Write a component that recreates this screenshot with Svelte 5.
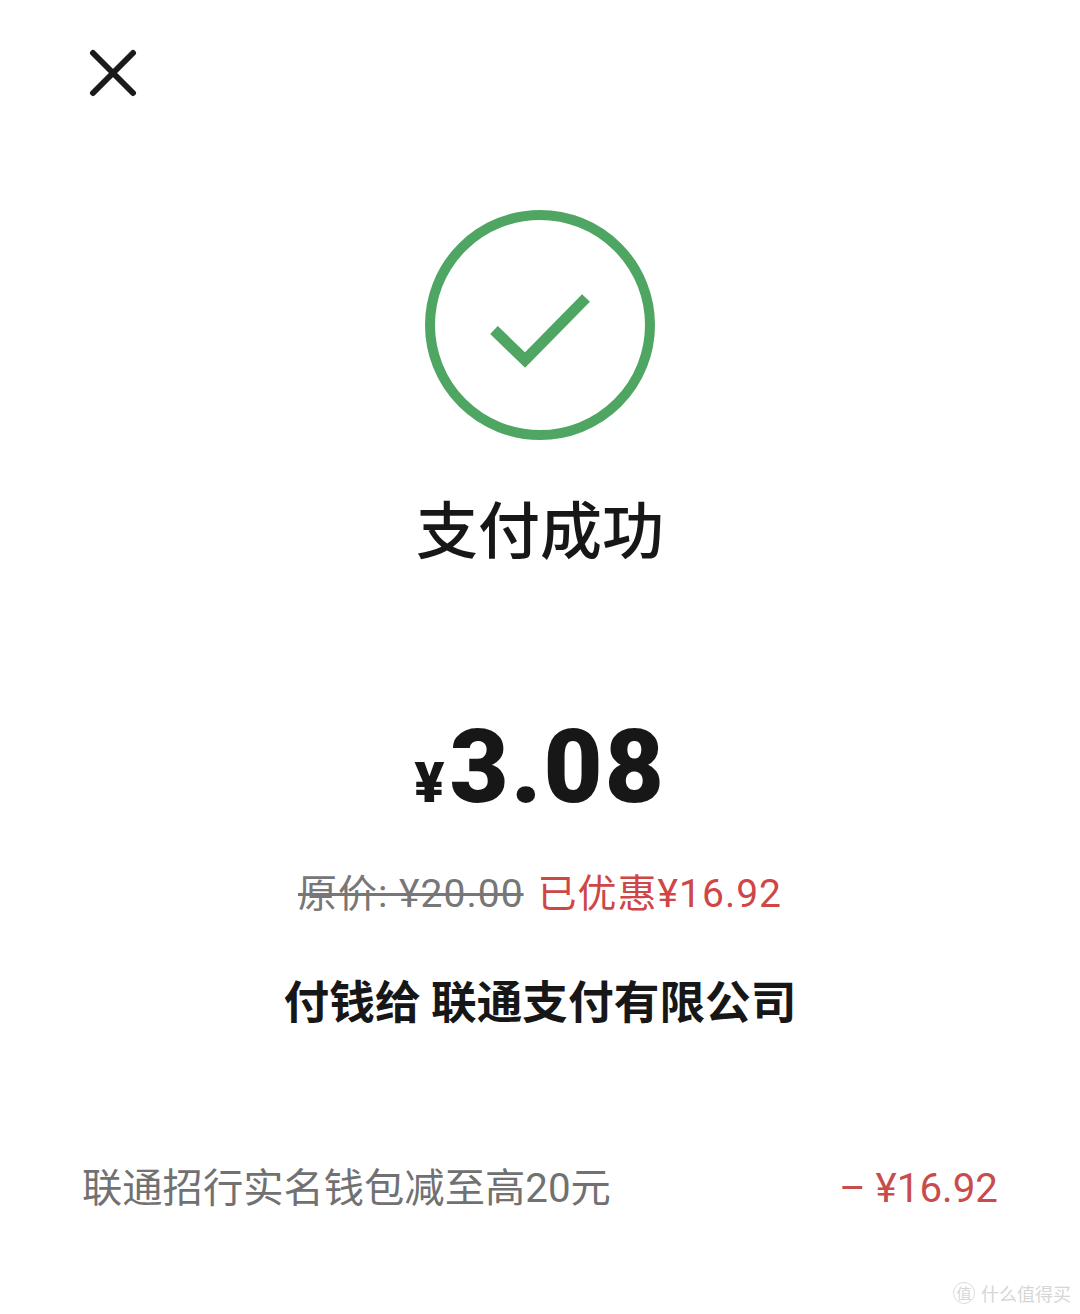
<script>
  const title = '支付成功';
</script>

<div class="page">
  <header class="top">
    <svg class="close" width="48" height="48" viewBox="0 0 48 48" aria-label="关闭">
      <path d="M4 4L44 44M44 4L4 44" />
    </svg>
  </header>

  <main class="result">
    <svg class="status" width="232" height="232" viewBox="0 0 232 232" aria-hidden="true">
      <circle cx="116" cy="116" r="110" />
      <path d="M70 121L101 151L162 89" />
    </svg>
    <h1>{title}</h1>

    <div class="amount"><span class="yen">¥</span>3.08</div>

    <div class="prices">
      <s>原价: ¥20.00</s>
      <span class="saved">已优惠¥16.92</span>
    </div>

    <div class="payee">付钱给 联通支付有限公司</div>
  </main>

  <section class="row">
    <span class="label">联通招行实名钱包减至高20元</span>
    <span class="discount">– ¥16.92</span>
  </section>

  <footer class="mark">
    <span class="badge">值</span>
    <span>什么值得买</span>
  </footer>
</div>

<style>
  :global(body) {
    margin: 0;
    background: #fff;
  }
  .page {
    position: relative;
    width: 1080px;
    height: 1314px;
    overflow: hidden;
    background: #fff;
    color: #171717;
    font-family: Roboto, "Noto Sans CJK SC", "Noto Sans", sans-serif;
  }
  .top {
    height: 209px;
    padding: 49px 0 0 89px;
    box-sizing: border-box;
  }
  .close {
    display: block;
  }
  .close path {
    fill: none;
    stroke: #1a1a1a;
    stroke-width: 6;
    stroke-linecap: round;
  }
  .result {
    display: flex;
    flex-direction: column;
    align-items: center;
  }
  .status {
    display: block;
  }
  .status circle,
  .status path {
    fill: none;
    stroke: #4fa562;
    stroke-width: 10;
  }
  .status path {
    stroke-width: 11;
  }
  h1 {
    margin: 41px 0 0;
    font-family: "Noto Sans CJK SC", sans-serif;
    font-size: 62px;
    line-height: 90px;
    font-weight: 500;
    letter-spacing: 0;
  }
  .amount {
    margin-top: 135px;
    font-family: Roboto, sans-serif;
    font-size: 102px;
    line-height: 120px;
    font-weight: 900;
    letter-spacing: 2px;
  }
  .yen {
    font-size: 56px;
    margin-right: 3px;
  }
  .prices {
    display: flex;
    gap: 14px;
    margin-top: 23px;
    font-size: 39px;
    line-height: 56px;
    letter-spacing: 1px;
  }
  .prices s {
    color: #777;
  }
  .saved {
    color: #cf4646;
  }
  .payee {
    margin-top: 45px;
    font-family: "Noto Sans CJK SC", sans-serif;
    font-size: 45.7px;
    line-height: 64px;
    font-weight: 700;
    white-space: pre;
  }
  .row {
    display: flex;
    justify-content: space-between;
    align-items: center;
    margin-top: 129px;
    padding: 0 82px;
    font-size: 40.3px;
    line-height: 58px;
  }
  .label {
    color: #717171;
  }
  .discount {
    color: #c94c4c;
  }
  .mark {
    position: absolute;
    left: 953px;
    top: 1281px;
    display: flex;
    align-items: center;
    gap: 6px;
    color: #d6d6d6;
    font-family: "Noto Sans CJK SC", sans-serif;
    font-size: 18px;
    line-height: 24px;
  }
  .badge {
    width: 22px;
    height: 22px;
    box-sizing: border-box;
    border: 1px solid #dddddd;
    border-radius: 50%;
    font-size: 15px;
    line-height: 20px;
    text-align: center;
  }
</style>
